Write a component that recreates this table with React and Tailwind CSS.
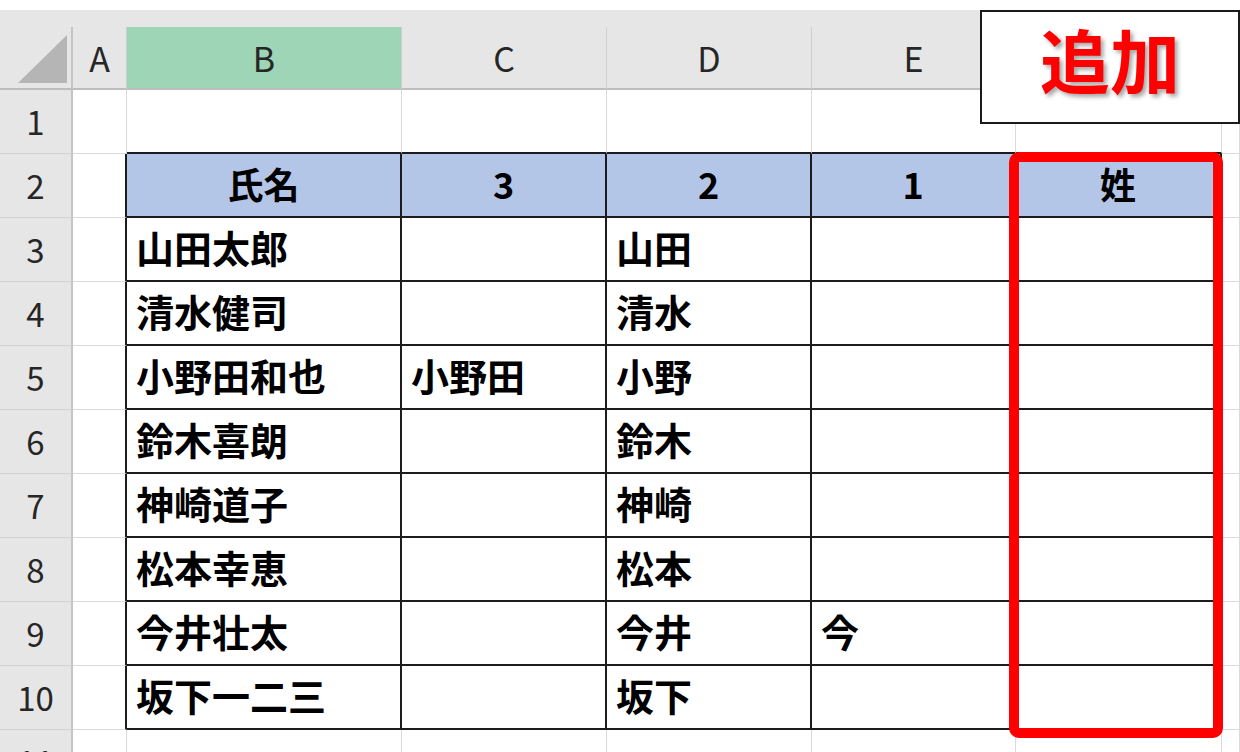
const letters = ["", "A", "B", "C", "D", "E", "", ""];

const data = {
  2: ["氏名", "3", "2", "1", "姓"],
  3: ["山田太郎", "", "山田", "", ""],
  4: ["清水健司", "", "清水", "", ""],
  5: ["小野田和也", "小野田", "小野", "", ""],
  6: ["鈴木喜朗", "", "鈴木", "", ""],
  7: ["神崎道子", "", "神崎", "", ""],
  8: ["松本幸恵", "", "松本", "", ""],
  9: ["今井壮太", "", "今井", "今", ""],
  10: ["坂下一二三", "", "坂下", "", ""],
};

const rows = [1, 2, 3, 4, 5, 6, 7, 8, 9, 10, 11];

function Cell({ r, c }) {
  if (c === 0) {
    return (
      <div className="flex items-center justify-center bg-[#e6e6e6] border-r-2 border-b border-r-[#c4c4c4] border-b-[#d2d2d2] text-[33px] text-[#262626]">
        {r}
      </div>
    );
  }

  const inTable = r >= 2 && r <= 10 && c >= 2 && c <= 6;

  if (inTable) {
    const text = data[r][c - 2];
    const head = r === 2;
    return (
      <div
        className={`flex items-center border-r-2 border-b-2 border-r-[#1c1c1c] border-b-[#1c1c1c] font-bold text-black ${
          head ? "bg-[#b4c6e7] justify-center text-[36px] pb-[4px]" : "bg-white pl-[9px] text-[38px] pb-[5px]"
        }`}
      >
        {text}
      </div>
    );
  }

  let cls = "bg-white border-r border-b border-r-[#dadada] border-b-[#dadada]";
  if (r === 1 && c >= 2 && c <= 6) {
    cls = "bg-white border-r border-b-2 border-r-[#dadada] border-b-[#1c1c1c]";
  } else if (c === 1 && r >= 2 && r <= 10) {
    cls = "bg-white border-r-2 border-b border-r-[#1c1c1c] border-b-[#dadada]";
  }
  return <div className={cls}></div>;
}

export default function App() {
  return (
    <div
      className="relative w-[1240px] h-[752px] overflow-hidden bg-white pt-[10px]"
      style={{ fontFamily: '"Noto Sans CJK JP", "Noto Sans", sans-serif' }}
    >
      <div className="h-[17px] bg-[#e6e6e6]"></div>
      <div className="grid grid-cols-[73px_54px_275px_205px_205px_204px_206px_18px] grid-rows-[63px_repeat(11,64px)]">
        {letters.map((l, i) =>
          i === 0 ? (
            <div key={i} className="relative bg-[#e6e6e6] border-r-2 border-b-2 border-r-[#c4c4c4] border-b-[#bdbdbd]">
              <svg className="absolute left-[18px] top-[8px]" width="50" height="49" viewBox="0 0 50 49">
                <polygon points="49,0 49,48 0,48" fill="#b5b5b5" />
              </svg>
            </div>
          ) : (
            <div
              key={i}
              className={`flex items-center justify-center border-r border-b-2 border-r-[#cfcfcf] border-b-[#bdbdbd] text-[34px] text-[#262626] ${
                i === 2 ? "bg-[#9fd5b7]" : "bg-[#e6e6e6]"
              }`}
            >
              {l}
            </div>
          )
        )}
        {rows.map((r) =>
          [0, 1, 2, 3, 4, 5, 6, 7].map((c) => <Cell key={`${r}-${c}`} r={r} c={c} />)
        )}
      </div>

      <div className="absolute left-[1009px] top-[152px] w-[214px] h-[586px] border-[10px] border-[#ff0000] rounded-[10px]"></div>

      <div className="absolute left-[980px] top-[10px] w-[260px] h-[114px] border-2 border-[#1a1a1a] bg-white flex items-center justify-center pb-[16px]">
        <span className="text-[70px] font-bold text-[#ff0000] leading-none [text-shadow:3px_3px_4px_rgba(0,0,0,0.35)]">
          追加
        </span>
      </div>
    </div>
  );
}
